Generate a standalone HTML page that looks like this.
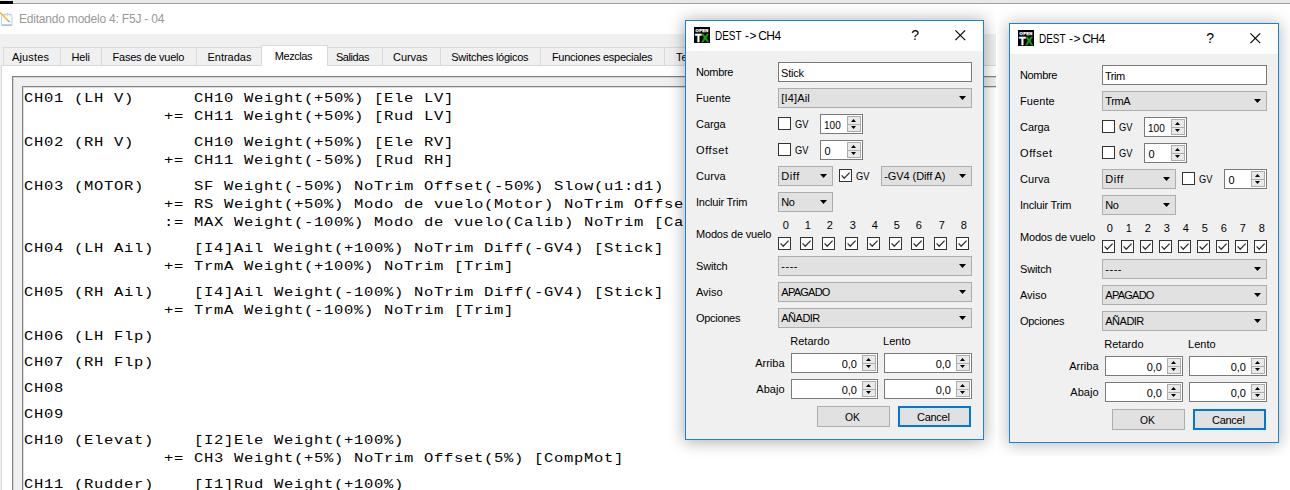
<!DOCTYPE html><html lang="es"><head><meta charset="utf-8"><title>Editando modelo 4: F5J - 04</title><style>
html,body{margin:0;padding:0}
body{width:1290px;height:490px;overflow:hidden;background:#fff;position:relative;font-family:"Liberation Sans",sans-serif}
div,svg,span{position:absolute}
.tx{white-space:pre;line-height:1;display:block}
#main{left:0;top:0;width:996px;height:490px;overflow:hidden}
#strip{left:0;top:0;width:1290px;height:3px;background:#e8e8e8;border-bottom:1px solid #a0a0a0}
#blk{left:0;top:1px;width:13px;height:3px;background:#000}
#clip1{left:0;top:4px;width:996px;height:486px;overflow:hidden}
#d1{left:685px;top:16px;width:299px;height:420px;box-shadow:0 1px 15px 1px rgba(0,0,0,.32)}
#clip2{left:997px;top:4px;width:293px;height:452px;overflow:hidden}
#d2{left:12px;top:19px;width:270px;height:420px;box-shadow:0 1px 15px 1px rgba(0,0,0,.27)}
.otx{width:16px;height:16px;background:#000;overflow:hidden}
.otx b{position:absolute;font-family:"Liberation Sans",sans-serif;line-height:1}
.otx .o{left:1.6px;top:1.7px;font-size:4.2px;color:#fff;letter-spacing:.3px;-webkit-text-stroke:.25px #fff}
.otx .t{left:1px;top:5.6px;font-size:11px;color:#fff;-webkit-text-stroke:.3px #fff}
.otx .x{left:7.4px;top:5.6px;font-size:11px;color:#1ea01e;-webkit-text-stroke:.4px #1ea01e}
</style></head><body>
<div id="main"><div style="left:0px;top:4px;width:996px;height:30px;background:#fff;"></div>
<div style="left:0px;top:34px;width:996px;height:456px;background:#f0f0f0;"></div>
<div style="left:1px;top:65px;width:1000px;height:430px;background:#fff;border:1px solid #d9d9d9;box-sizing:border-box;"></div>
<div style="left:3px;top:47px;width:58px;height:18px;background:#f0f0f0;border:1px solid #d9d9d9;box-sizing:border-box;border-bottom:none;"></div>
<div style="left:60px;top:47px;width:42px;height:18px;background:#f0f0f0;border:1px solid #d9d9d9;box-sizing:border-box;border-bottom:none;"></div>
<div style="left:101px;top:47px;width:96px;height:18px;background:#f0f0f0;border:1px solid #d9d9d9;box-sizing:border-box;border-bottom:none;"></div>
<div style="left:196px;top:47px;width:68px;height:18px;background:#f0f0f0;border:1px solid #d9d9d9;box-sizing:border-box;border-bottom:none;"></div>
<div style="left:261px;top:45px;width:67px;height:21px;background:#fff;border:1px solid #d9d9d9;box-sizing:border-box;border-bottom:none;"></div>
<div style="left:327px;top:47px;width:56px;height:18px;background:#f0f0f0;border:1px solid #d9d9d9;box-sizing:border-box;border-bottom:none;"></div>
<div style="left:382px;top:47px;width:59px;height:18px;background:#f0f0f0;border:1px solid #d9d9d9;box-sizing:border-box;border-bottom:none;"></div>
<div style="left:440px;top:47px;width:101px;height:18px;background:#f0f0f0;border:1px solid #d9d9d9;box-sizing:border-box;border-bottom:none;"></div>
<div style="left:540px;top:47px;width:125px;height:18px;background:#f0f0f0;border:1px solid #d9d9d9;box-sizing:border-box;border-bottom:none;"></div>
<div style="left:664px;top:47px;width:77px;height:18px;background:#f0f0f0;border:1px solid #d9d9d9;box-sizing:border-box;border-bottom:none;"></div>
<svg style="left:0;top:11px" width="15" height="17" viewBox="0 0 15 17">
<rect x="1.5" y="3.5" width="10.5" height="11" rx="1" fill="#fcfdfe" stroke="#b9d3ee"/>
<path d="M1.5 14h10.5" stroke="#8fb6e0" stroke-width="1.2"/>
<path d="M5 2v3M7.5 2v3M10 2v3" stroke="#d0d4da" stroke-width="1"/>
<path d="M0 1.5L8.6 10.1" stroke="#f2b83c" stroke-width="1.5"/>
<path d="M8.4 9.9l1.3 1.3" stroke="#666" stroke-width="1"/>
</svg>
<div style="left:12px;top:76px;width:1000px;height:430px;background:#f0f0f0;border:1px solid #828282;box-sizing:border-box;"></div>
<div style="left:13px;top:77px;width:1000px;height:430px;border:1px solid #d4d4d4;box-sizing:border-box;border-right:none;border-bottom:none;"></div>
<div style="left:22px;top:86px;width:1000px;height:420px;background:#fff;border:1px solid #828282;box-sizing:border-box;"></div>
<div style="left:23px;top:87px;width:1000px;height:420px;border:1px solid #dcdcdc;box-sizing:border-box;border-right:none;border-bottom:none;"></div><span class="tx" id="t0" style="font-size:11px;color:#000;letter-spacing:0.137px;left:12.00px;top:51.69px;">Ajustes</span>
<span class="tx" id="t1" style="font-size:11px;color:#000;letter-spacing:-0.184px;left:71.50px;top:51.69px;">Heli</span>
<span class="tx" id="t2" style="font-size:11px;color:#000;letter-spacing:-0.208px;left:112.50px;top:51.69px;">Fases de vuelo</span>
<span class="tx" id="t3" style="font-size:11px;color:#000;letter-spacing:-0.019px;left:207.50px;top:51.69px;">Entradas</span>
<span class="tx" id="t4" style="font-size:11px;color:#000;letter-spacing:-0.457px;left:274.80px;top:50.69px;">Mezclas</span>
<span class="tx" id="t5" style="font-size:11px;color:#000;letter-spacing:-0.430px;left:335.90px;top:51.69px;">Salidas</span>
<span class="tx" id="t6" style="font-size:11px;color:#000;letter-spacing:-0.109px;left:393.10px;top:51.69px;">Curvas</span>
<span class="tx" id="t7" style="font-size:11px;color:#000;letter-spacing:-0.269px;left:451.30px;top:51.69px;">Switches lógicos</span>
<span class="tx" id="t8" style="font-size:11px;color:#000;letter-spacing:-0.268px;left:551.90px;top:51.69px;">Funciones especiales</span>
<span class="tx" id="t9" style="font-size:11px;color:#000;left:675.90px;top:51.69px;">Te</span>
<span class="tx" id="t10" style="font-size:12px;color:#999;letter-spacing:-0.206px;left:19.00px;top:12.84px;">Editando modelo 4: F5J - 04</span>
<span class="tx" id="t11" style="font-size:13.5px;color:#000;font-family:'Liberation Mono', monospace;transform:scaleX(1.15);transform-origin:0 0;letter-spacing:0.596px;left:24.00px;top:91.65px;">CH01 (LH V)      CH10 Weight(+50%) [Ele LV]</span>
<span class="tx" id="t12" style="font-size:13.5px;color:#000;font-family:'Liberation Mono', monospace;transform:scaleX(1.15);transform-origin:0 0;letter-spacing:0.596px;left:24.00px;top:109.65px;">              += CH11 Weight(+50%) [Rud LV]</span>
<span class="tx" id="t13" style="font-size:13.5px;color:#000;font-family:'Liberation Mono', monospace;transform:scaleX(1.15);transform-origin:0 0;letter-spacing:0.596px;left:24.00px;top:135.65px;">CH02 (RH V)      CH10 Weight(+50%) [Ele RV]</span>
<span class="tx" id="t14" style="font-size:13.5px;color:#000;font-family:'Liberation Mono', monospace;transform:scaleX(1.15);transform-origin:0 0;letter-spacing:0.596px;left:24.00px;top:153.65px;">              += CH11 Weight(-50%) [Rud RH]</span>
<span class="tx" id="t15" style="font-size:13.5px;color:#000;font-family:'Liberation Mono', monospace;transform:scaleX(1.15);transform-origin:0 0;letter-spacing:0.596px;left:24.00px;top:179.65px;">CH03 (MOTOR)     SF Weight(-50%) NoTrim Offset(-50%) Slow(u1:d1)</span>
<span class="tx" id="t16" style="font-size:13.5px;color:#000;font-family:'Liberation Mono', monospace;transform:scaleX(1.15);transform-origin:0 0;letter-spacing:0.596px;left:24.00px;top:197.65px;">              += RS Weight(+50%) Modo de vuelo(Motor) NoTrim Offse</span>
<span class="tx" id="t17" style="font-size:13.5px;color:#000;font-family:'Liberation Mono', monospace;transform:scaleX(1.15);transform-origin:0 0;letter-spacing:0.596px;left:24.00px;top:215.65px;">              := MAX Weight(-100%) Modo de vuelo(Calib) NoTrim [Ca</span>
<span class="tx" id="t18" style="font-size:13.5px;color:#000;font-family:'Liberation Mono', monospace;transform:scaleX(1.15);transform-origin:0 0;letter-spacing:0.596px;left:24.00px;top:241.65px;">CH04 (LH Ail)    [I4]Ail Weight(+100%) NoTrim Diff(-GV4) [Stick]</span>
<span class="tx" id="t19" style="font-size:13.5px;color:#000;font-family:'Liberation Mono', monospace;transform:scaleX(1.15);transform-origin:0 0;letter-spacing:0.596px;left:24.00px;top:259.65px;">              += TrmA Weight(+100%) NoTrim [Trim]</span>
<span class="tx" id="t20" style="font-size:13.5px;color:#000;font-family:'Liberation Mono', monospace;transform:scaleX(1.15);transform-origin:0 0;letter-spacing:0.596px;left:24.00px;top:285.65px;">CH05 (RH Ail)    [I4]Ail Weight(-100%) NoTrim Diff(-GV4) [Stick]</span>
<span class="tx" id="t21" style="font-size:13.5px;color:#000;font-family:'Liberation Mono', monospace;transform:scaleX(1.15);transform-origin:0 0;letter-spacing:0.596px;left:24.00px;top:303.65px;">              += TrmA Weight(-100%) NoTrim [Trim]</span>
<span class="tx" id="t22" style="font-size:13.5px;color:#000;font-family:'Liberation Mono', monospace;transform:scaleX(1.15);transform-origin:0 0;letter-spacing:0.596px;left:24.00px;top:329.65px;">CH06 (LH Flp)</span>
<span class="tx" id="t23" style="font-size:13.5px;color:#000;font-family:'Liberation Mono', monospace;transform:scaleX(1.15);transform-origin:0 0;letter-spacing:0.596px;left:24.00px;top:355.65px;">CH07 (RH Flp)</span>
<span class="tx" id="t24" style="font-size:13.5px;color:#000;font-family:'Liberation Mono', monospace;transform:scaleX(1.15);transform-origin:0 0;letter-spacing:0.596px;left:24.00px;top:381.65px;">CH08</span>
<span class="tx" id="t25" style="font-size:13.5px;color:#000;font-family:'Liberation Mono', monospace;transform:scaleX(1.15);transform-origin:0 0;letter-spacing:0.596px;left:24.00px;top:407.65px;">CH09</span>
<span class="tx" id="t26" style="font-size:13.5px;color:#000;font-family:'Liberation Mono', monospace;transform:scaleX(1.15);transform-origin:0 0;letter-spacing:0.596px;left:24.00px;top:433.65px;">CH10 (Elevat)    [I2]Ele Weight(+100%)</span>
<span class="tx" id="t27" style="font-size:13.5px;color:#000;font-family:'Liberation Mono', monospace;transform:scaleX(1.15);transform-origin:0 0;letter-spacing:0.596px;left:24.00px;top:451.65px;">              += CH3 Weight(+5%) NoTrim Offset(5%) [CompMot]</span>
<span class="tx" id="t28" style="font-size:13.5px;color:#000;font-family:'Liberation Mono', monospace;transform:scaleX(1.15);transform-origin:0 0;letter-spacing:0.596px;left:24.00px;top:477.65px;">CH11 (Rudder)    [I1]Rud Weight(+100%)</span></div>
<div id="strip"></div><div id="blk"></div>
<div id="clip1"><div id="d1"><div style="left:0px;top:0px;width:299px;height:420px;background:#f0f0f0;border:1px solid #1883d7;box-sizing:border-box;"></div>
<div style="left:1px;top:1px;width:297px;height:30px;background:#fff;"></div>
<div class="otx" style="left:9px;top:7px"><b class="o">OPEN</b><b class="t">T</b><b class="x">X</b></div>
<svg style="left:269.5px;top:9.5px" width="11" height="11" viewBox="0 0 11 11"><path d="M0.4 0.4L10.2 10.2M10.2 0.4L0.4 10.2" stroke="#000" stroke-width="1.15"/></svg>
<div style="left:93px;top:42px;width:194px;height:20px;background:#fff;border:1px solid #7a7a7a;box-sizing:border-box;"></div>
<div style="left:93px;top:68px;width:194px;height:20px;background:#e1e1e1;border:1px solid #adadad;box-sizing:border-box;"><svg width="7" height="4" viewBox="0 0 7 4" style="position:absolute;right:5px;top:7px"><path d="M0 0h7L3.5 4z" fill="#000"/></svg></div>
<div style="left:93px;top:97px;width:13px;height:13px;background:#fff;border:1px solid #333;box-sizing:border-box;"></div>
<div style="left:135px;top:94px;width:43px;height:20px;background:#fff;border:1px solid #7a7a7a;box-sizing:border-box;"><div style="right:1px;top:1px;width:14px;height:9px;background:#e9e9e9;border:1px solid #adadad;box-sizing:border-box"><svg width="5" height="3" viewBox="0 0 5 3" style="position:absolute;left:3.2px;top:2.2px"><path d="M0 3h5L2.5 0z" fill="#000"/></svg></div><div style="right:1px;top:9px;width:14px;height:8px;background:#e9e9e9;border:1px solid #adadad;box-sizing:border-box"><svg width="5" height="3" viewBox="0 0 5 3" style="position:absolute;left:3.2px;top:1.1px"><path d="M0 0h5L2.5 3z" fill="#000"/></svg></div></div>
<div style="left:93px;top:123px;width:13px;height:13px;background:#fff;border:1px solid #333;box-sizing:border-box;"></div>
<div style="left:135px;top:120px;width:43px;height:20px;background:#fff;border:1px solid #7a7a7a;box-sizing:border-box;"><div style="right:1px;top:1px;width:14px;height:9px;background:#e9e9e9;border:1px solid #adadad;box-sizing:border-box"><svg width="5" height="3" viewBox="0 0 5 3" style="position:absolute;left:3.2px;top:2.2px"><path d="M0 3h5L2.5 0z" fill="#000"/></svg></div><div style="right:1px;top:9px;width:14px;height:8px;background:#e9e9e9;border:1px solid #adadad;box-sizing:border-box"><svg width="5" height="3" viewBox="0 0 5 3" style="position:absolute;left:3.2px;top:1.1px"><path d="M0 0h5L2.5 3z" fill="#000"/></svg></div></div>
<div style="left:93px;top:146px;width:55px;height:20px;background:#e1e1e1;border:1px solid #adadad;box-sizing:border-box;"><svg width="7" height="4" viewBox="0 0 7 4" style="position:absolute;right:5px;top:7px"><path d="M0 0h7L3.5 4z" fill="#000"/></svg></div>
<div style="left:154px;top:149px;width:13px;height:13px;background:#fff;border:1px solid #333;box-sizing:border-box;"><svg width="11" height="11" viewBox="0 0 11 11" style="position:absolute;left:0;top:0"><path d="M1.6 5.4L4.2 8.2L9.6 2.6" fill="none" stroke="#333" stroke-width="1.3"/></svg></div>
<div style="left:196px;top:146px;width:91px;height:20px;background:#e1e1e1;border:1px solid #adadad;box-sizing:border-box;"><svg width="7" height="4" viewBox="0 0 7 4" style="position:absolute;right:5px;top:7px"><path d="M0 0h7L3.5 4z" fill="#000"/></svg></div>
<div style="left:93px;top:172px;width:55px;height:20px;background:#e1e1e1;border:1px solid #adadad;box-sizing:border-box;"><svg width="7" height="4" viewBox="0 0 7 4" style="position:absolute;right:5px;top:7px"><path d="M0 0h7L3.5 4z" fill="#000"/></svg></div>
<div style="left:93px;top:217px;width:13px;height:13px;background:#fff;border:1px solid #333;box-sizing:border-box;"><svg width="11" height="11" viewBox="0 0 11 11" style="position:absolute;left:0;top:0"><path d="M1.6 5.4L4.2 8.2L9.6 2.6" fill="none" stroke="#333" stroke-width="1.3"/></svg></div>
<div style="left:115px;top:217px;width:13px;height:13px;background:#fff;border:1px solid #333;box-sizing:border-box;"><svg width="11" height="11" viewBox="0 0 11 11" style="position:absolute;left:0;top:0"><path d="M1.6 5.4L4.2 8.2L9.6 2.6" fill="none" stroke="#333" stroke-width="1.3"/></svg></div>
<div style="left:137px;top:217px;width:13px;height:13px;background:#fff;border:1px solid #333;box-sizing:border-box;"><svg width="11" height="11" viewBox="0 0 11 11" style="position:absolute;left:0;top:0"><path d="M1.6 5.4L4.2 8.2L9.6 2.6" fill="none" stroke="#333" stroke-width="1.3"/></svg></div>
<div style="left:160px;top:217px;width:13px;height:13px;background:#fff;border:1px solid #333;box-sizing:border-box;"><svg width="11" height="11" viewBox="0 0 11 11" style="position:absolute;left:0;top:0"><path d="M1.6 5.4L4.2 8.2L9.6 2.6" fill="none" stroke="#333" stroke-width="1.3"/></svg></div>
<div style="left:182px;top:217px;width:13px;height:13px;background:#fff;border:1px solid #333;box-sizing:border-box;"><svg width="11" height="11" viewBox="0 0 11 11" style="position:absolute;left:0;top:0"><path d="M1.6 5.4L4.2 8.2L9.6 2.6" fill="none" stroke="#333" stroke-width="1.3"/></svg></div>
<div style="left:204px;top:217px;width:13px;height:13px;background:#fff;border:1px solid #333;box-sizing:border-box;"><svg width="11" height="11" viewBox="0 0 11 11" style="position:absolute;left:0;top:0"><path d="M1.6 5.4L4.2 8.2L9.6 2.6" fill="none" stroke="#333" stroke-width="1.3"/></svg></div>
<div style="left:226px;top:217px;width:13px;height:13px;background:#fff;border:1px solid #333;box-sizing:border-box;"><svg width="11" height="11" viewBox="0 0 11 11" style="position:absolute;left:0;top:0"><path d="M1.6 5.4L4.2 8.2L9.6 2.6" fill="none" stroke="#333" stroke-width="1.3"/></svg></div>
<div style="left:249px;top:217px;width:13px;height:13px;background:#fff;border:1px solid #333;box-sizing:border-box;"><svg width="11" height="11" viewBox="0 0 11 11" style="position:absolute;left:0;top:0"><path d="M1.6 5.4L4.2 8.2L9.6 2.6" fill="none" stroke="#333" stroke-width="1.3"/></svg></div>
<div style="left:271px;top:217px;width:13px;height:13px;background:#fff;border:1px solid #333;box-sizing:border-box;"><svg width="11" height="11" viewBox="0 0 11 11" style="position:absolute;left:0;top:0"><path d="M1.6 5.4L4.2 8.2L9.6 2.6" fill="none" stroke="#333" stroke-width="1.3"/></svg></div>
<div style="left:93px;top:236px;width:194px;height:20px;background:#e1e1e1;border:1px solid #adadad;box-sizing:border-box;"><svg width="7" height="4" viewBox="0 0 7 4" style="position:absolute;right:5px;top:7px"><path d="M0 0h7L3.5 4z" fill="#000"/></svg></div>
<div style="left:93px;top:262px;width:194px;height:20px;background:#e1e1e1;border:1px solid #adadad;box-sizing:border-box;"><svg width="7" height="4" viewBox="0 0 7 4" style="position:absolute;right:5px;top:7px"><path d="M0 0h7L3.5 4z" fill="#000"/></svg></div>
<div style="left:93px;top:288px;width:194px;height:20px;background:#e1e1e1;border:1px solid #adadad;box-sizing:border-box;"><svg width="7" height="4" viewBox="0 0 7 4" style="position:absolute;right:5px;top:7px"><path d="M0 0h7L3.5 4z" fill="#000"/></svg></div>
<div style="left:106px;top:333px;width:87px;height:20px;background:#fff;border:1px solid #7a7a7a;box-sizing:border-box;"><div style="right:1px;top:1px;width:14px;height:9px;background:#e9e9e9;border:1px solid #adadad;box-sizing:border-box"><svg width="5" height="3" viewBox="0 0 5 3" style="position:absolute;left:3.2px;top:2.2px"><path d="M0 3h5L2.5 0z" fill="#000"/></svg></div><div style="right:1px;top:9px;width:14px;height:8px;background:#e9e9e9;border:1px solid #adadad;box-sizing:border-box"><svg width="5" height="3" viewBox="0 0 5 3" style="position:absolute;left:3.2px;top:1.1px"><path d="M0 0h5L2.5 3z" fill="#000"/></svg></div></div>
<div style="left:199px;top:333px;width:88px;height:20px;background:#fff;border:1px solid #7a7a7a;box-sizing:border-box;"><div style="right:1px;top:1px;width:14px;height:9px;background:#e9e9e9;border:1px solid #adadad;box-sizing:border-box"><svg width="5" height="3" viewBox="0 0 5 3" style="position:absolute;left:3.2px;top:2.2px"><path d="M0 3h5L2.5 0z" fill="#000"/></svg></div><div style="right:1px;top:9px;width:14px;height:8px;background:#e9e9e9;border:1px solid #adadad;box-sizing:border-box"><svg width="5" height="3" viewBox="0 0 5 3" style="position:absolute;left:3.2px;top:1.1px"><path d="M0 0h5L2.5 3z" fill="#000"/></svg></div></div>
<div style="left:106px;top:359px;width:87px;height:20px;background:#fff;border:1px solid #7a7a7a;box-sizing:border-box;"><div style="right:1px;top:1px;width:14px;height:9px;background:#e9e9e9;border:1px solid #adadad;box-sizing:border-box"><svg width="5" height="3" viewBox="0 0 5 3" style="position:absolute;left:3.2px;top:2.2px"><path d="M0 3h5L2.5 0z" fill="#000"/></svg></div><div style="right:1px;top:9px;width:14px;height:8px;background:#e9e9e9;border:1px solid #adadad;box-sizing:border-box"><svg width="5" height="3" viewBox="0 0 5 3" style="position:absolute;left:3.2px;top:1.1px"><path d="M0 0h5L2.5 3z" fill="#000"/></svg></div></div>
<div style="left:199px;top:359px;width:88px;height:20px;background:#fff;border:1px solid #7a7a7a;box-sizing:border-box;"><div style="right:1px;top:1px;width:14px;height:9px;background:#e9e9e9;border:1px solid #adadad;box-sizing:border-box"><svg width="5" height="3" viewBox="0 0 5 3" style="position:absolute;left:3.2px;top:2.2px"><path d="M0 3h5L2.5 0z" fill="#000"/></svg></div><div style="right:1px;top:9px;width:14px;height:8px;background:#e9e9e9;border:1px solid #adadad;box-sizing:border-box"><svg width="5" height="3" viewBox="0 0 5 3" style="position:absolute;left:3.2px;top:1.1px"><path d="M0 0h5L2.5 3z" fill="#000"/></svg></div></div>
<div style="left:132px;top:386px;width:73px;height:21px;background:#e1e1e1;border:1px solid #adadad;box-sizing:border-box;"></div>
<div style="left:213px;top:386px;width:73px;height:21px;background:#e1e1e1;border:2px solid #0078d7;box-sizing:border-box;"></div><span class="tx" id="t29" style="font-size:12px;color:#000;transform:scaleX(0.832);transform-origin:0 0;left:30.20px;top:9.84px;">DEST</span>
<span class="tx" id="t30" style="font-size:12px;color:#000;letter-spacing:0.584px;left:60.00px;top:9.84px;">-&gt;</span>
<span class="tx" id="t31" style="font-size:12px;color:#000;letter-spacing:-0.608px;left:73.30px;top:9.84px;">CH4</span>
<span class="tx" id="t32" style="font-size:14px;color:#000;left:226.20px;top:8.15px;">?</span>
<span class="tx" id="t33" style="font-size:11px;color:#000;letter-spacing:-0.345px;left:11.00px;top:46.69px;">Nombre</span>
<span class="tx" id="t34" style="font-size:11px;color:#000;letter-spacing:0.090px;left:11.00px;top:72.69px;">Fuente</span>
<span class="tx" id="t35" style="font-size:11px;color:#000;letter-spacing:-0.067px;left:11.00px;top:98.69px;">Carga</span>
<span class="tx" id="t36" style="font-size:11px;color:#000;letter-spacing:0.589px;left:11.00px;top:124.69px;">Offset</span>
<span class="tx" id="t37" style="font-size:11px;color:#000;letter-spacing:0.089px;left:11.00px;top:150.69px;">Curva</span>
<span class="tx" id="t38" style="font-size:11px;color:#000;letter-spacing:-0.216px;left:11.00px;top:176.69px;">Incluir Trim</span>
<span class="tx" id="t39" style="font-size:11px;color:#000;letter-spacing:-0.175px;left:11.00px;top:208.69px;">Modos de vuelo</span>
<span class="tx" id="t40" style="font-size:11px;color:#000;letter-spacing:-0.161px;left:11.00px;top:240.69px;">Switch</span>
<span class="tx" id="t41" style="font-size:11px;color:#000;letter-spacing:-0.026px;left:11.00px;top:266.69px;">Aviso</span>
<span class="tx" id="t42" style="font-size:11px;color:#000;letter-spacing:-0.298px;left:11.00px;top:292.69px;">Opciones</span>
<span class="tx" id="t43" style="font-size:11px;color:#000;letter-spacing:-0.236px;left:96.10px;top:47.69px;">Stick</span>
<span class="tx" id="t44" style="font-size:11px;color:#000;letter-spacing:0.147px;left:96.30px;top:72.69px;">[I4]Ail</span>
<span class="tx" id="t45" style="font-size:11px;color:#000;transform:scaleX(0.846);transform-origin:0 0;left:110.20px;top:98.69px;">GV</span>
<span class="tx" id="t46" style="font-size:11px;color:#000;transform:scaleX(0.911);transform-origin:0 0;left:139.40px;top:99.69px;">100</span>
<span class="tx" id="t47" style="font-size:11px;color:#000;transform:scaleX(0.846);transform-origin:0 0;left:110.20px;top:124.69px;">GV</span>
<span class="tx" id="t48" style="font-size:11px;color:#000;left:139.40px;top:125.69px;">0</span>
<span class="tx" id="t49" style="font-size:11px;color:#000;letter-spacing:0.529px;left:96.30px;top:150.69px;">Diff</span>
<span class="tx" id="t50" style="font-size:11px;color:#000;transform:scaleX(0.840);transform-origin:0 0;left:170.90px;top:150.69px;">GV</span>
<span class="tx" id="t51" style="font-size:11px;color:#000;letter-spacing:-0.088px;left:199.30px;top:150.69px;">-GV4 (Diff A)</span>
<span class="tx" id="t52" style="font-size:11px;color:#000;letter-spacing:-0.462px;left:96.30px;top:176.69px;">No</span>
<span class="tx" id="t53" style="font-size:11px;color:#000;left:97.70px;top:199.69px;">0</span>
<span class="tx" id="t54" style="font-size:11px;color:#000;left:119.70px;top:199.69px;">1</span>
<span class="tx" id="t55" style="font-size:11px;color:#000;left:141.70px;top:199.69px;">2</span>
<span class="tx" id="t56" style="font-size:11px;color:#000;left:164.70px;top:199.69px;">3</span>
<span class="tx" id="t57" style="font-size:11px;color:#000;left:186.70px;top:199.69px;">4</span>
<span class="tx" id="t58" style="font-size:11px;color:#000;left:208.70px;top:199.69px;">5</span>
<span class="tx" id="t59" style="font-size:11px;color:#000;left:230.70px;top:199.69px;">6</span>
<span class="tx" id="t60" style="font-size:11px;color:#000;left:253.70px;top:199.69px;">7</span>
<span class="tx" id="t61" style="font-size:11px;color:#000;left:275.70px;top:199.69px;">8</span>
<span class="tx" id="t62" style="font-size:11px;color:#000;letter-spacing:0.515px;left:96.30px;top:240.69px;">----</span>
<span class="tx" id="t63" style="font-size:11px;color:#000;letter-spacing:-0.749px;left:96.30px;top:266.69px;">APAGADO</span>
<span class="tx" id="t64" style="font-size:11px;color:#000;letter-spacing:-0.512px;left:96.30px;top:292.69px;">AÑADIR</span>
<span class="tx" id="t65" style="font-size:11px;color:#000;letter-spacing:0.043px;left:105.20px;top:315.69px;">Retardo</span>
<span class="tx" id="t66" style="font-size:11px;color:#000;letter-spacing:0.017px;left:198.10px;top:315.69px;">Lento</span>
<span class="tx" id="t67" style="font-size:11px;color:#000;left:70.16px;top:337.69px;">Arriba</span>
<span class="tx" id="t68" style="font-size:11px;color:#000;left:71.36px;top:363.69px;">Abajo</span>
<span class="tx" id="t69" style="font-size:11px;color:#000;left:156.70px;top:338.69px;">0,0</span>
<span class="tx" id="t70" style="font-size:11px;color:#000;left:250.70px;top:338.69px;">0,0</span>
<span class="tx" id="t71" style="font-size:11px;color:#000;left:156.70px;top:364.69px;">0,0</span>
<span class="tx" id="t72" style="font-size:11px;color:#000;left:250.70px;top:364.69px;">0,0</span>
<span class="tx" id="t73" style="font-size:11px;color:#000;transform:scaleX(0.940);transform-origin:0 0;left:160.20px;top:391.69px;">OK</span>
<span class="tx" id="t74" style="font-size:11px;color:#000;letter-spacing:-0.270px;left:232.00px;top:391.69px;">Cancel</span></div></div>
<div id="clip2"><div id="d2"><div style="left:0px;top:0px;width:270px;height:420px;background:#f0f0f0;border:1px solid #1883d7;box-sizing:border-box;"></div>
<div style="left:1px;top:1px;width:268px;height:30px;background:#fff;"></div>
<div class="otx" style="left:9px;top:7px"><b class="o">OPEN</b><b class="t">T</b><b class="x">X</b></div>
<svg style="left:240.5px;top:9.5px" width="11" height="11" viewBox="0 0 11 11"><path d="M0.4 0.4L10.2 10.2M10.2 0.4L0.4 10.2" stroke="#000" stroke-width="1.15"/></svg>
<div style="left:93px;top:42px;width:165px;height:20px;background:#fff;border:1px solid #7a7a7a;box-sizing:border-box;"></div>
<div style="left:93px;top:68px;width:165px;height:20px;background:#e1e1e1;border:1px solid #adadad;box-sizing:border-box;"><svg width="7" height="4" viewBox="0 0 7 4" style="position:absolute;right:5px;top:7px"><path d="M0 0h7L3.5 4z" fill="#000"/></svg></div>
<div style="left:93px;top:97px;width:13px;height:13px;background:#fff;border:1px solid #333;box-sizing:border-box;"></div>
<div style="left:135px;top:94px;width:43px;height:20px;background:#fff;border:1px solid #7a7a7a;box-sizing:border-box;"><div style="right:1px;top:1px;width:14px;height:9px;background:#e9e9e9;border:1px solid #adadad;box-sizing:border-box"><svg width="5" height="3" viewBox="0 0 5 3" style="position:absolute;left:3.2px;top:2.2px"><path d="M0 3h5L2.5 0z" fill="#000"/></svg></div><div style="right:1px;top:9px;width:14px;height:8px;background:#e9e9e9;border:1px solid #adadad;box-sizing:border-box"><svg width="5" height="3" viewBox="0 0 5 3" style="position:absolute;left:3.2px;top:1.1px"><path d="M0 0h5L2.5 3z" fill="#000"/></svg></div></div>
<div style="left:93px;top:123px;width:13px;height:13px;background:#fff;border:1px solid #333;box-sizing:border-box;"></div>
<div style="left:135px;top:120px;width:43px;height:20px;background:#fff;border:1px solid #7a7a7a;box-sizing:border-box;"><div style="right:1px;top:1px;width:14px;height:9px;background:#e9e9e9;border:1px solid #adadad;box-sizing:border-box"><svg width="5" height="3" viewBox="0 0 5 3" style="position:absolute;left:3.2px;top:2.2px"><path d="M0 3h5L2.5 0z" fill="#000"/></svg></div><div style="right:1px;top:9px;width:14px;height:8px;background:#e9e9e9;border:1px solid #adadad;box-sizing:border-box"><svg width="5" height="3" viewBox="0 0 5 3" style="position:absolute;left:3.2px;top:1.1px"><path d="M0 0h5L2.5 3z" fill="#000"/></svg></div></div>
<div style="left:93px;top:146px;width:74px;height:20px;background:#e1e1e1;border:1px solid #adadad;box-sizing:border-box;"><svg width="7" height="4" viewBox="0 0 7 4" style="position:absolute;right:5px;top:7px"><path d="M0 0h7L3.5 4z" fill="#000"/></svg></div>
<div style="left:173px;top:149px;width:13px;height:13px;background:#fff;border:1px solid #333;box-sizing:border-box;"></div>
<div style="left:215px;top:146px;width:43px;height:20px;background:#fff;border:1px solid #7a7a7a;box-sizing:border-box;"><div style="right:1px;top:1px;width:14px;height:9px;background:#e9e9e9;border:1px solid #adadad;box-sizing:border-box"><svg width="5" height="3" viewBox="0 0 5 3" style="position:absolute;left:3.2px;top:2.2px"><path d="M0 3h5L2.5 0z" fill="#000"/></svg></div><div style="right:1px;top:9px;width:14px;height:8px;background:#e9e9e9;border:1px solid #adadad;box-sizing:border-box"><svg width="5" height="3" viewBox="0 0 5 3" style="position:absolute;left:3.2px;top:1.1px"><path d="M0 0h5L2.5 3z" fill="#000"/></svg></div></div>
<div style="left:93px;top:172px;width:74px;height:20px;background:#e1e1e1;border:1px solid #adadad;box-sizing:border-box;"><svg width="7" height="4" viewBox="0 0 7 4" style="position:absolute;right:5px;top:7px"><path d="M0 0h7L3.5 4z" fill="#000"/></svg></div>
<div style="left:93px;top:217px;width:13px;height:13px;background:#fff;border:1px solid #333;box-sizing:border-box;"><svg width="11" height="11" viewBox="0 0 11 11" style="position:absolute;left:0;top:0"><path d="M1.6 5.4L4.2 8.2L9.6 2.6" fill="none" stroke="#333" stroke-width="1.3"/></svg></div>
<div style="left:112px;top:217px;width:13px;height:13px;background:#fff;border:1px solid #333;box-sizing:border-box;"><svg width="11" height="11" viewBox="0 0 11 11" style="position:absolute;left:0;top:0"><path d="M1.6 5.4L4.2 8.2L9.6 2.6" fill="none" stroke="#333" stroke-width="1.3"/></svg></div>
<div style="left:131px;top:217px;width:13px;height:13px;background:#fff;border:1px solid #333;box-sizing:border-box;"><svg width="11" height="11" viewBox="0 0 11 11" style="position:absolute;left:0;top:0"><path d="M1.6 5.4L4.2 8.2L9.6 2.6" fill="none" stroke="#333" stroke-width="1.3"/></svg></div>
<div style="left:150px;top:217px;width:13px;height:13px;background:#fff;border:1px solid #333;box-sizing:border-box;"><svg width="11" height="11" viewBox="0 0 11 11" style="position:absolute;left:0;top:0"><path d="M1.6 5.4L4.2 8.2L9.6 2.6" fill="none" stroke="#333" stroke-width="1.3"/></svg></div>
<div style="left:169px;top:217px;width:13px;height:13px;background:#fff;border:1px solid #333;box-sizing:border-box;"><svg width="11" height="11" viewBox="0 0 11 11" style="position:absolute;left:0;top:0"><path d="M1.6 5.4L4.2 8.2L9.6 2.6" fill="none" stroke="#333" stroke-width="1.3"/></svg></div>
<div style="left:188px;top:217px;width:13px;height:13px;background:#fff;border:1px solid #333;box-sizing:border-box;"><svg width="11" height="11" viewBox="0 0 11 11" style="position:absolute;left:0;top:0"><path d="M1.6 5.4L4.2 8.2L9.6 2.6" fill="none" stroke="#333" stroke-width="1.3"/></svg></div>
<div style="left:207px;top:217px;width:13px;height:13px;background:#fff;border:1px solid #333;box-sizing:border-box;"><svg width="11" height="11" viewBox="0 0 11 11" style="position:absolute;left:0;top:0"><path d="M1.6 5.4L4.2 8.2L9.6 2.6" fill="none" stroke="#333" stroke-width="1.3"/></svg></div>
<div style="left:226px;top:217px;width:13px;height:13px;background:#fff;border:1px solid #333;box-sizing:border-box;"><svg width="11" height="11" viewBox="0 0 11 11" style="position:absolute;left:0;top:0"><path d="M1.6 5.4L4.2 8.2L9.6 2.6" fill="none" stroke="#333" stroke-width="1.3"/></svg></div>
<div style="left:245px;top:217px;width:13px;height:13px;background:#fff;border:1px solid #333;box-sizing:border-box;"><svg width="11" height="11" viewBox="0 0 11 11" style="position:absolute;left:0;top:0"><path d="M1.6 5.4L4.2 8.2L9.6 2.6" fill="none" stroke="#333" stroke-width="1.3"/></svg></div>
<div style="left:93px;top:236px;width:165px;height:20px;background:#e1e1e1;border:1px solid #adadad;box-sizing:border-box;"><svg width="7" height="4" viewBox="0 0 7 4" style="position:absolute;right:5px;top:7px"><path d="M0 0h7L3.5 4z" fill="#000"/></svg></div>
<div style="left:93px;top:262px;width:165px;height:20px;background:#e1e1e1;border:1px solid #adadad;box-sizing:border-box;"><svg width="7" height="4" viewBox="0 0 7 4" style="position:absolute;right:5px;top:7px"><path d="M0 0h7L3.5 4z" fill="#000"/></svg></div>
<div style="left:93px;top:288px;width:165px;height:20px;background:#e1e1e1;border:1px solid #adadad;box-sizing:border-box;"><svg width="7" height="4" viewBox="0 0 7 4" style="position:absolute;right:5px;top:7px"><path d="M0 0h7L3.5 4z" fill="#000"/></svg></div>
<div style="left:96px;top:333px;width:78px;height:20px;background:#fff;border:1px solid #7a7a7a;box-sizing:border-box;"><div style="right:1px;top:1px;width:14px;height:9px;background:#e9e9e9;border:1px solid #adadad;box-sizing:border-box"><svg width="5" height="3" viewBox="0 0 5 3" style="position:absolute;left:3.2px;top:2.2px"><path d="M0 3h5L2.5 0z" fill="#000"/></svg></div><div style="right:1px;top:9px;width:14px;height:8px;background:#e9e9e9;border:1px solid #adadad;box-sizing:border-box"><svg width="5" height="3" viewBox="0 0 5 3" style="position:absolute;left:3.2px;top:1.1px"><path d="M0 0h5L2.5 3z" fill="#000"/></svg></div></div>
<div style="left:180px;top:333px;width:78px;height:20px;background:#fff;border:1px solid #7a7a7a;box-sizing:border-box;"><div style="right:1px;top:1px;width:14px;height:9px;background:#e9e9e9;border:1px solid #adadad;box-sizing:border-box"><svg width="5" height="3" viewBox="0 0 5 3" style="position:absolute;left:3.2px;top:2.2px"><path d="M0 3h5L2.5 0z" fill="#000"/></svg></div><div style="right:1px;top:9px;width:14px;height:8px;background:#e9e9e9;border:1px solid #adadad;box-sizing:border-box"><svg width="5" height="3" viewBox="0 0 5 3" style="position:absolute;left:3.2px;top:1.1px"><path d="M0 0h5L2.5 3z" fill="#000"/></svg></div></div>
<div style="left:96px;top:359px;width:78px;height:20px;background:#fff;border:1px solid #7a7a7a;box-sizing:border-box;"><div style="right:1px;top:1px;width:14px;height:9px;background:#e9e9e9;border:1px solid #adadad;box-sizing:border-box"><svg width="5" height="3" viewBox="0 0 5 3" style="position:absolute;left:3.2px;top:2.2px"><path d="M0 3h5L2.5 0z" fill="#000"/></svg></div><div style="right:1px;top:9px;width:14px;height:8px;background:#e9e9e9;border:1px solid #adadad;box-sizing:border-box"><svg width="5" height="3" viewBox="0 0 5 3" style="position:absolute;left:3.2px;top:1.1px"><path d="M0 0h5L2.5 3z" fill="#000"/></svg></div></div>
<div style="left:180px;top:359px;width:78px;height:20px;background:#fff;border:1px solid #7a7a7a;box-sizing:border-box;"><div style="right:1px;top:1px;width:14px;height:9px;background:#e9e9e9;border:1px solid #adadad;box-sizing:border-box"><svg width="5" height="3" viewBox="0 0 5 3" style="position:absolute;left:3.2px;top:2.2px"><path d="M0 3h5L2.5 0z" fill="#000"/></svg></div><div style="right:1px;top:9px;width:14px;height:8px;background:#e9e9e9;border:1px solid #adadad;box-sizing:border-box"><svg width="5" height="3" viewBox="0 0 5 3" style="position:absolute;left:3.2px;top:1.1px"><path d="M0 0h5L2.5 3z" fill="#000"/></svg></div></div>
<div style="left:103px;top:386px;width:73px;height:21px;background:#e1e1e1;border:1px solid #adadad;box-sizing:border-box;"></div>
<div style="left:184px;top:386px;width:73px;height:21px;background:#e1e1e1;border:2px solid #0078d7;box-sizing:border-box;"></div><span class="tx" id="t75" style="font-size:12px;color:#000;transform:scaleX(0.832);transform-origin:0 0;left:30.20px;top:9.84px;">DEST</span>
<span class="tx" id="t76" style="font-size:12px;color:#000;letter-spacing:0.584px;left:60.00px;top:9.84px;">-&gt;</span>
<span class="tx" id="t77" style="font-size:12px;color:#000;letter-spacing:-0.608px;left:73.30px;top:9.84px;">CH4</span>
<span class="tx" id="t78" style="font-size:14px;color:#000;left:197.20px;top:8.15px;">?</span>
<span class="tx" id="t79" style="font-size:11px;color:#000;letter-spacing:-0.345px;left:11.00px;top:46.69px;">Nombre</span>
<span class="tx" id="t80" style="font-size:11px;color:#000;letter-spacing:0.090px;left:11.00px;top:72.69px;">Fuente</span>
<span class="tx" id="t81" style="font-size:11px;color:#000;letter-spacing:-0.067px;left:11.00px;top:98.69px;">Carga</span>
<span class="tx" id="t82" style="font-size:11px;color:#000;letter-spacing:0.589px;left:11.00px;top:124.69px;">Offset</span>
<span class="tx" id="t83" style="font-size:11px;color:#000;letter-spacing:0.089px;left:11.00px;top:150.69px;">Curva</span>
<span class="tx" id="t84" style="font-size:11px;color:#000;letter-spacing:-0.216px;left:11.00px;top:176.69px;">Incluir Trim</span>
<span class="tx" id="t85" style="font-size:11px;color:#000;letter-spacing:-0.175px;left:11.00px;top:208.69px;">Modos de vuelo</span>
<span class="tx" id="t86" style="font-size:11px;color:#000;letter-spacing:-0.161px;left:11.00px;top:240.69px;">Switch</span>
<span class="tx" id="t87" style="font-size:11px;color:#000;letter-spacing:-0.026px;left:11.00px;top:266.69px;">Aviso</span>
<span class="tx" id="t88" style="font-size:11px;color:#000;letter-spacing:-0.298px;left:11.00px;top:292.69px;">Opciones</span>
<span class="tx" id="t89" style="font-size:11px;color:#000;letter-spacing:-0.531px;left:96.10px;top:47.69px;">Trim</span>
<span class="tx" id="t90" style="font-size:11px;color:#000;letter-spacing:-0.395px;left:96.30px;top:72.69px;">TrmA</span>
<span class="tx" id="t91" style="font-size:11px;color:#000;transform:scaleX(0.846);transform-origin:0 0;left:110.20px;top:98.69px;">GV</span>
<span class="tx" id="t92" style="font-size:11px;color:#000;transform:scaleX(0.911);transform-origin:0 0;left:139.40px;top:99.69px;">100</span>
<span class="tx" id="t93" style="font-size:11px;color:#000;transform:scaleX(0.846);transform-origin:0 0;left:110.20px;top:124.69px;">GV</span>
<span class="tx" id="t94" style="font-size:11px;color:#000;left:139.40px;top:125.69px;">0</span>
<span class="tx" id="t95" style="font-size:11px;color:#000;letter-spacing:0.529px;left:96.30px;top:150.69px;">Diff</span>
<span class="tx" id="t96" style="font-size:11px;color:#000;transform:scaleX(0.840);transform-origin:0 0;left:189.90px;top:150.69px;">GV</span>
<span class="tx" id="t97" style="font-size:11px;color:#000;left:219.40px;top:151.69px;">0</span>
<span class="tx" id="t98" style="font-size:11px;color:#000;letter-spacing:-0.462px;left:96.30px;top:176.69px;">No</span>
<span class="tx" id="t99" style="font-size:11px;color:#000;left:97.70px;top:199.69px;">0</span>
<span class="tx" id="t100" style="font-size:11px;color:#000;left:116.70px;top:199.69px;">1</span>
<span class="tx" id="t101" style="font-size:11px;color:#000;left:135.70px;top:199.69px;">2</span>
<span class="tx" id="t102" style="font-size:11px;color:#000;left:154.70px;top:199.69px;">3</span>
<span class="tx" id="t103" style="font-size:11px;color:#000;left:173.70px;top:199.69px;">4</span>
<span class="tx" id="t104" style="font-size:11px;color:#000;left:192.70px;top:199.69px;">5</span>
<span class="tx" id="t105" style="font-size:11px;color:#000;left:211.70px;top:199.69px;">6</span>
<span class="tx" id="t106" style="font-size:11px;color:#000;left:230.70px;top:199.69px;">7</span>
<span class="tx" id="t107" style="font-size:11px;color:#000;left:249.70px;top:199.69px;">8</span>
<span class="tx" id="t108" style="font-size:11px;color:#000;letter-spacing:0.515px;left:96.30px;top:240.69px;">----</span>
<span class="tx" id="t109" style="font-size:11px;color:#000;letter-spacing:-0.749px;left:96.30px;top:266.69px;">APAGADO</span>
<span class="tx" id="t110" style="font-size:11px;color:#000;letter-spacing:-0.512px;left:96.30px;top:292.69px;">AÑADIR</span>
<span class="tx" id="t111" style="font-size:11px;color:#000;letter-spacing:0.043px;left:95.20px;top:315.69px;">Retardo</span>
<span class="tx" id="t112" style="font-size:11px;color:#000;letter-spacing:0.017px;left:179.10px;top:315.69px;">Lento</span>
<span class="tx" id="t113" style="font-size:11px;color:#000;left:60.16px;top:337.69px;">Arriba</span>
<span class="tx" id="t114" style="font-size:11px;color:#000;left:61.36px;top:363.69px;">Abajo</span>
<span class="tx" id="t115" style="font-size:11px;color:#000;left:137.70px;top:338.69px;">0,0</span>
<span class="tx" id="t116" style="font-size:11px;color:#000;left:221.70px;top:338.69px;">0,0</span>
<span class="tx" id="t117" style="font-size:11px;color:#000;left:137.70px;top:364.69px;">0,0</span>
<span class="tx" id="t118" style="font-size:11px;color:#000;left:221.70px;top:364.69px;">0,0</span>
<span class="tx" id="t119" style="font-size:11px;color:#000;transform:scaleX(0.940);transform-origin:0 0;left:131.20px;top:391.69px;">OK</span>
<span class="tx" id="t120" style="font-size:11px;color:#000;letter-spacing:-0.270px;left:203.00px;top:391.69px;">Cancel</span></div></div>
</body></html>
